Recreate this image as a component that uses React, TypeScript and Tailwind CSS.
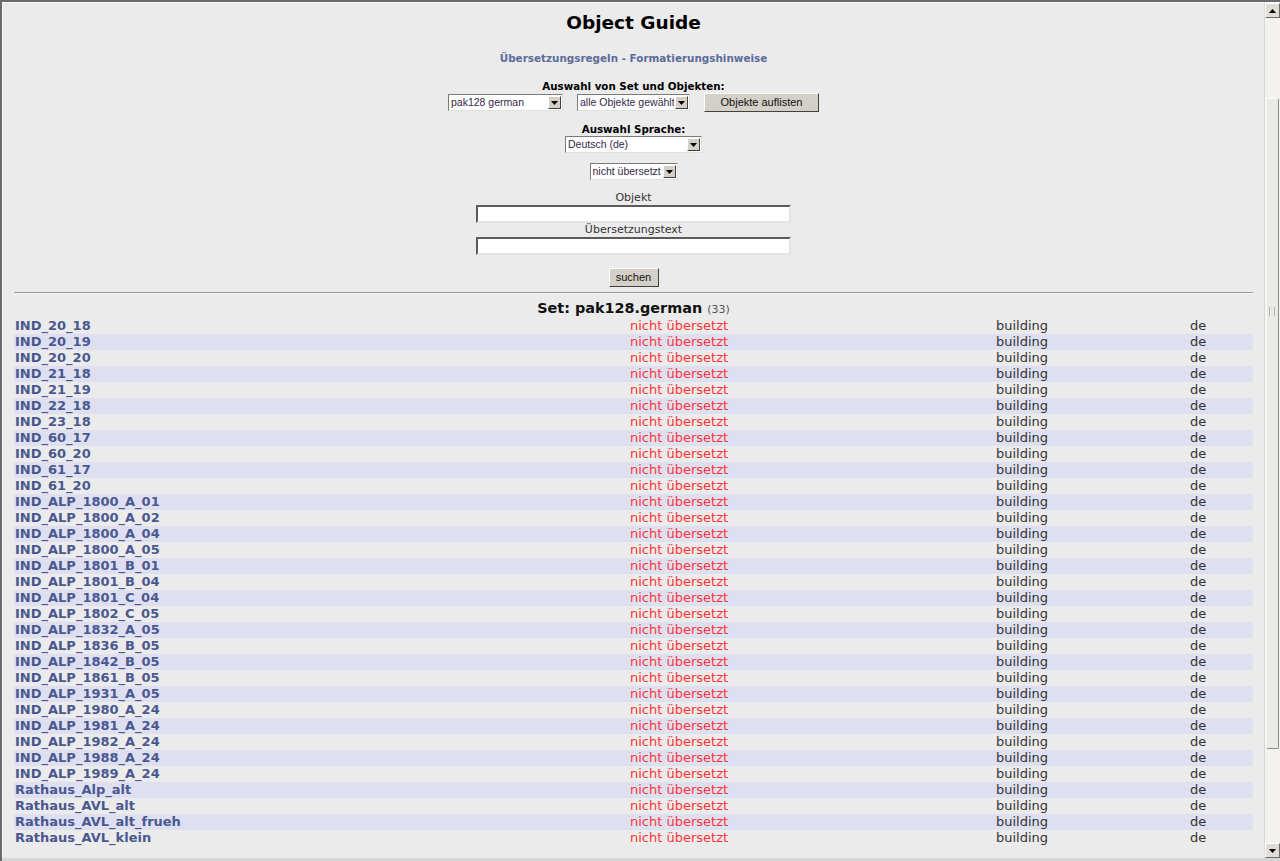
import React from 'react';

const objects = [
  'IND_20_18', 'IND_20_19', 'IND_20_20', 'IND_21_18', 'IND_21_19', 'IND_22_18', 'IND_23_18',
  'IND_60_17', 'IND_60_20', 'IND_61_17', 'IND_61_20',
  'IND_ALP_1800_A_01', 'IND_ALP_1800_A_02', 'IND_ALP_1800_A_04', 'IND_ALP_1800_A_05',
  'IND_ALP_1801_B_01', 'IND_ALP_1801_B_04', 'IND_ALP_1801_C_04', 'IND_ALP_1802_C_05',
  'IND_ALP_1832_A_05', 'IND_ALP_1836_B_05', 'IND_ALP_1842_B_05', 'IND_ALP_1861_B_05',
  'IND_ALP_1931_A_05', 'IND_ALP_1980_A_24', 'IND_ALP_1981_A_24', 'IND_ALP_1982_A_24',
  'IND_ALP_1988_A_24', 'IND_ALP_1989_A_24',
  'Rathaus_Alp_alt', 'Rathaus_AVL_alt', 'Rathaus_AVL_alt_frueh', 'Rathaus_AVL_klein',
];

const verdana = "font-['DejaVu_Sans',Verdana,sans-serif]";
const arial = "font-['Liberation_Sans',Arial,sans-serif]";

// little black triangle used by the select boxes and scrollbar
const Arrow: React.FC<{ up?: boolean }> = ({ up }) => (
  <svg width="7" height="4" viewBox="0 0 7 4">
    <path d={up ? 'M0 4 L3.5 0 L7 4 Z' : 'M0 0 L7 0 L3.5 4 Z'} fill="#000" />
  </svg>
);

const FakeSelect: React.FC<{ label: string; w: string }> = ({ label, w }) => (
  <div
    className={`${w} h-[17px] flex items-stretch bg-white border border-t-[#7a7a7a] border-l-[#7a7a7a] border-b-[#e0e0e0] border-r-[#e0e0e0]`}
  >
    <span className={`flex-1 pl-[2px] text-[10.5px] leading-[15px] text-[#35284a] whitespace-nowrap overflow-hidden ${arial}`}>
      {label}
    </span>
    <span className="w-[13px] m-[1px] flex items-center justify-center bg-[#d4d0c8] border border-t-white border-l-white border-b-[#404040] border-r-[#404040]">
      <Arrow />
    </span>
  </div>
);

const Button: React.FC<{ label: string; w: string }> = ({ label, w }) => (
  <div
    className={`${w} h-[19px] flex items-center justify-center bg-[#d4d0c8] border border-t-white border-l-white border-b-[#404040] border-r-[#404040] text-[11px] text-[#111] ${arial}`}
  >
    {label}
  </div>
);

const TextInput: React.FC = () => (
  <div className="w-[315px] h-[18px] bg-white border-2 border-t-[#5a5a5a] border-l-[#5a5a5a] border-b-[#e4e4e4] border-r-[#e4e4e4]" />
);

const Scrollbar: React.FC = () => (
  <div className="w-[16px] flex flex-col bg-[#f3f2ee] border-l border-[#d8d8d8]">
    <div className="h-[15px] flex items-center justify-center bg-[#e0ddd6] border border-t-white border-l-white border-b-[#6a6a6a] border-r-[#6a6a6a]">
      <Arrow up />
    </div>
    <div className="flex-1 flex flex-col">
      <div className="h-[80px]" />
      <div className="h-[651px] relative mx-[1px] bg-[#ebe9e4] border border-t-[#fafafa] border-l-[#fafafa] border-b-[#8a8a8a] border-r-[#8a8a8a] rounded-[2px]">
        <div className="absolute left-[2px] top-[208px] w-[6px] h-[9px] border-x border-[#b8b6b0]" />
      </div>
      <div className="flex-1" />
    </div>
    <div className="h-[15px] flex items-center justify-center bg-[#e0ddd6] border border-t-white border-l-white border-b-[#6a6a6a] border-r-[#6a6a6a]">
      <Arrow />
    </div>
  </div>
);

export default function App() {
  return (
    <div className="w-[1280px] h-[861px] overflow-hidden flex flex-col bg-[#ebebeb] border-t-2 border-l-2 border-[#6b6b6b]">
      <div className="flex flex-1 min-h-0 border-t border-l border-[#f8f8f8]">
        <main className={`flex-1 min-w-0 overflow-hidden pl-[11px] pr-[11px] ${verdana}`}>
          <div className="flex flex-col items-center">
            <h1 className="mt-[8px] text-[18.5px] leading-[24px] font-bold text-black">Object Guide</h1>

            <p className="mt-[16px] text-[10.4px] leading-[14px] font-bold text-[#5c6a9c]">
              Übersetzungsregeln - Formatierungshinweise
            </p>

            <p className="mt-[14px] text-[10.3px] leading-[14px] font-bold text-black">Auswahl von Set und Objekten:</p>
            <div className="flex items-center gap-[14px] h-[19px]">
              <FakeSelect label="pak128 german" w="w-[115px]" />
              <FakeSelect label="alle Objekte gewählt" w="w-[113px]" />
              <Button label="Objekte auflisten" w="w-[115px]" />
            </div>

            <p className="mt-[10px] text-[10.3px] leading-[14px] font-bold text-black">Auswahl Sprache:</p>
            <FakeSelect label="Deutsch (de)" w="w-[137px]" />

            <div className="mt-[10px]">
              <FakeSelect label="nicht übersetzt" w="w-[88px]" />
            </div>

            <p className="mt-[11px] text-[11px] leading-[14px] text-[#333]">Objekt</p>
            <TextInput />
            <p className="text-[11px] leading-[14px] text-[#333]">Übersetzungstext</p>
            <TextInput />

            <div className="mt-[13px]">
              <Button label="suchen" w="w-[50px]" />
            </div>
          </div>

          <hr className="mt-[5px] w-full border-0 border-t border-b border-t-[#9a9a9a] border-b-[#f6f6f6]" />

          <h2 className="mt-[6px] text-center text-[14.4px] leading-[16px] font-bold text-[#111]">
            Set: pak128.german <span className="text-[11px] font-normal text-[#555]">(33)</span>
          </h2>

          <div className="flex flex-col">
            {objects.map((name, i) => (
              <div
                key={name}
                className={`grid grid-cols-[615px_366px_194px_1fr] h-[16px] text-[13px] leading-[16px] ${
                  i % 2 === 1 ? 'bg-[#dfdff2]' : ''
                }`}
              >
                <span className="px-[1px] font-bold text-[#4a5890] whitespace-nowrap">{name}</span>
                <span className="px-[1px] text-[#ff3535]">nicht übersetzt</span>
                <span className="px-[1px] text-[#333]">building</span>
                <span className="px-[1px] text-[#333]">de</span>
              </div>
            ))}
          </div>
        </main>
        <Scrollbar />
      </div>
      <div className="h-[3px] bg-[#d6d6d6]" />
    </div>
  );
}
